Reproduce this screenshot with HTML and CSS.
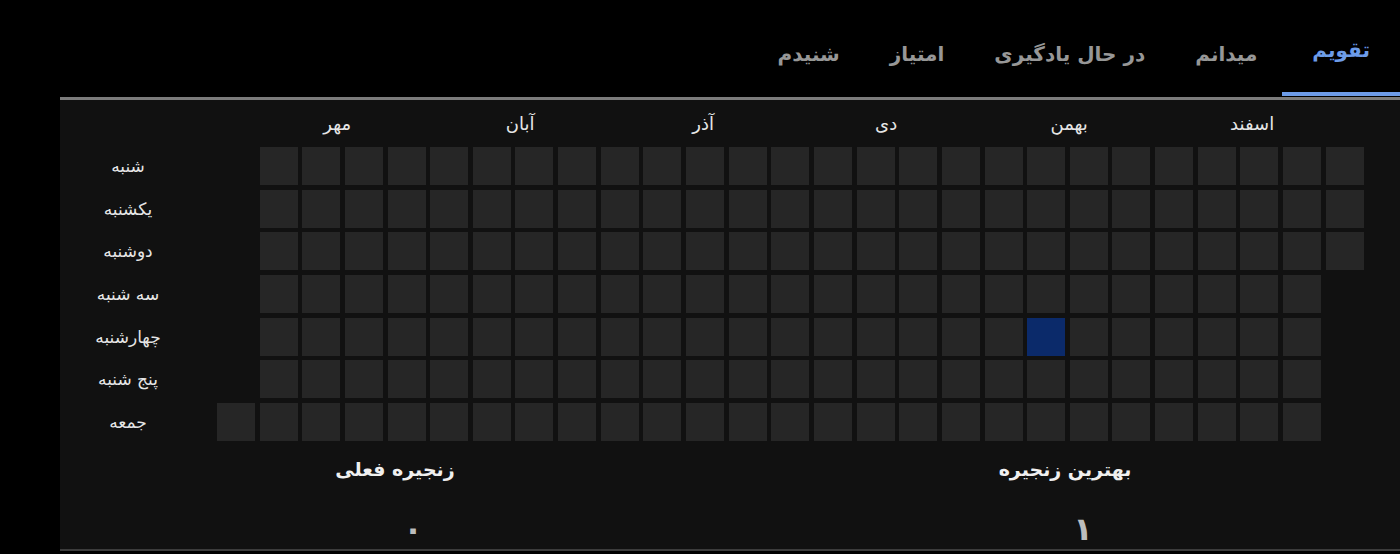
FILE: index.html
```html
<!DOCTYPE html>
<html lang="fa">
<head>
    <meta charset="utf-8">
    <title>تقویم</title>
    <link rel="stylesheet" href="styles.css">
</head>
<body>
    <div class="tabs">
        <div class="tab active">تقویم</div>
        <div class="tab">میدانم</div>
        <div class="tab">در حال یادگیری</div>
        <div class="tab">امتیاز</div>
        <div class="tab">شنیدم</div>
    </div>
    <div class="panel">
        <div class="calendar">
            <div class="dayLabels">
                <div>شنبه</div>
                <div>یکشنبه</div>
                <div>دوشنبه</div>
                <div>سه شنبه</div>
                <div>چهارشنبه</div>
                <div>پنج شنبه</div>
                <div>جمعه</div>
            </div>
            <div class="gridWrap">
                <div class="months">
                    <span>اسفند</span>
                    <span>بهمن</span>
                    <span>دی</span>
                    <span>آذر</span>
                    <span>آبان</span>
                    <span>مهر</span>
                </div>
                <div class="grid" id="grid"></div>
            </div>
        </div>
        <div class="stats">
            <div class="stat">
                <h3>بهترین زنجیره</h3>
                <div class="num">۱</div>
            </div>
            <div class="stat">
                <h3>زنجیره فعلی</h3>
                <div class="num">۰</div>
            </div>
        </div>
    </div>
    <script>
        // 27 weeks, columns left to right, 7 days each
        const grid = document.getElementById("grid");
        for (let col = 0; col < 27; col++) {
            for (let row = 0; row < 7; row++) {
                const cell = document.createElement("div");
                cell.className = "cell";
                if (col === 0 && row < 6) cell.className += " empty";
                if (col === 26 && row > 2) cell.className += " empty";
                if (col === 19 && row === 4) cell.className += " done";
                grid.appendChild(cell);
            }
        }
    </script>
</body>
</html>
```

FILE: styles.css
```css
body {
    margin: 0;
    background: #000;
    color: #e6e6e6;
    font-family: "DejaVu Sans", sans-serif;
    direction: rtl;
}
.tabs {
    display: flex;
    height: 97px;
    margin-left: 60px;
    border-bottom: 3px solid #7c7c7c;
}
.tab {
    padding: 8px 25px 0;
    display: flex;
    align-items: center;
    font-size: 20px;
    font-weight: bold;
    color: #979797;
    margin-bottom: -3px;
}
.tab.active {
    color: #6d9ce9;
    padding: 8px 30px 0;
    border-bottom: 4px solid #6d9ce9;
    height: 96px;
    box-sizing: border-box;
}
.panel {
    margin-left: 60px;
    background: #111;
    padding-bottom: 8px;
    border-bottom: 2px solid #3c3c3c;
}
.calendar {
    display: flex;
    direction: ltr;
}
.dayLabels {
    width: 136px;
    margin-top: 47px;
    margin-right: 21px;
    display: flex;
    flex-direction: column;
    gap: 4.65px;
}
.dayLabels div {
    height: 38px;
    line-height: 38px;
    text-align: center;
    font-size: 17px;
    direction: rtl;
}
.months {
    direction: rtl;
    display: flex;
    height: 47px;
    align-items: center;
    padding-right: 20px;
}
.months span {
    width: 183px;
    text-align: center;
    font-size: 18px;
}
.grid {
    display: grid;
    grid-template-rows: repeat(7, 38px);
    grid-auto-flow: column;
    grid-auto-columns: 38px;
    gap: 4.65px;
}
.cell {
    background: #262626;
}
.cell.empty {
    visibility: hidden;
}
.cell.done {
    background: #0b2a6a;
}
.stats {
    display: flex;
    height: 100px;
    overflow: hidden;
}
.stat {
    flex: 1;
    text-align: center;
}
.stat h3 {
    margin: 15px 0 0;
    font-size: 19px;
    line-height: 26px;
    font-weight: bold;
    color: #f0f0f0;
}
.num {
    margin-top: 28px;
    padding-left: 36px;
    font-size: 32px;
    font-weight: bold;
    color: #bdbdbd;
}
```
